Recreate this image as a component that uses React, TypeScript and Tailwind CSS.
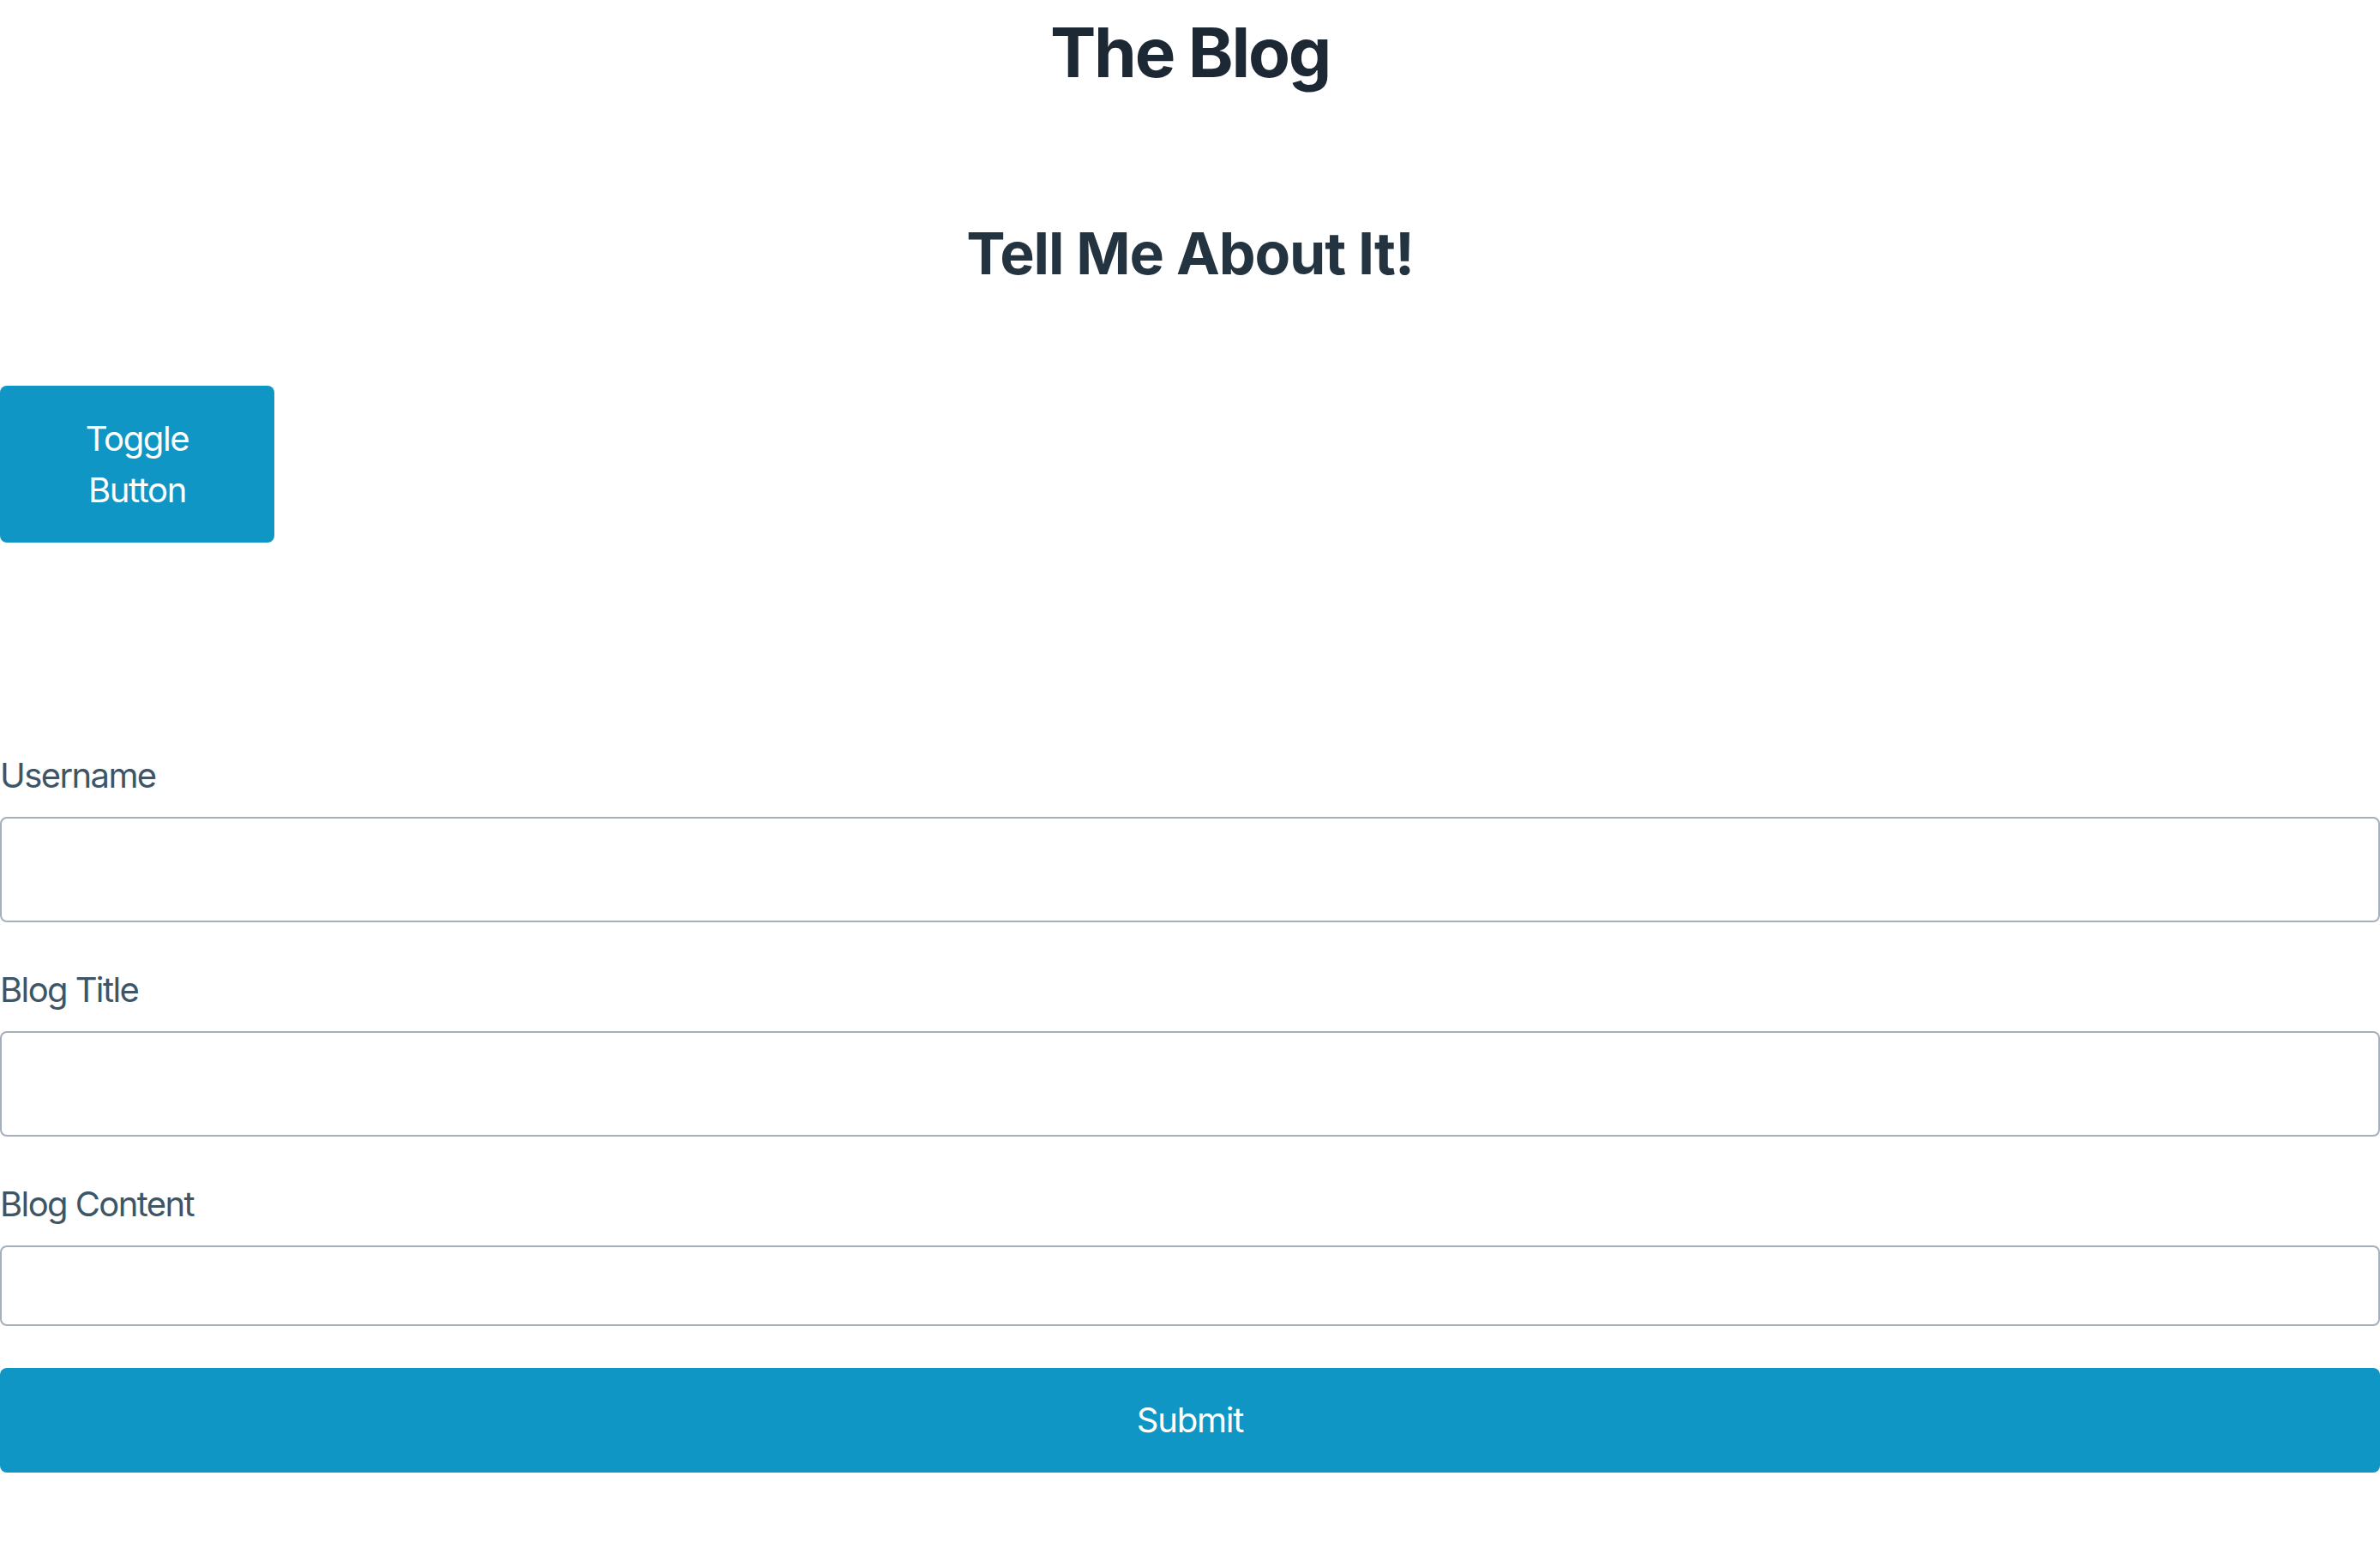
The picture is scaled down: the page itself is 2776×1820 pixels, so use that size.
import { useState } from "react"

const Field = ({ label, id, tall = true }: { label: string; id: string; tall?: boolean }) => (
  <div className="flex flex-col">
    <label htmlFor={id} className="text-[40px] leading-[60px] tracking-[-0.04em] text-[#3e5566]">
      {label}
    </label>
    {tall ? (
      <input
        id={id}
        type="text"
        className="mt-[18px] h-[123px] w-full rounded-[8px] border-2 border-[#a3b0bb] px-4 text-[40px] outline-none"
      />
    ) : (
      <textarea
        id={id}
        rows={1}
        className="mt-[18px] block h-[94px] w-full resize-none rounded-[8px] border-2 border-[#a3b0bb] px-4 text-[40px] outline-none"
      />
    )}
  </div>
)

const App = () => {
  const [open, setOpen] = useState(false)

  return (
    <div className="min-h-screen bg-white font-['Inter',sans-serif]">
      <h1 className="pt-[13px] text-center text-[80px] leading-[96px] font-bold tracking-[-0.028em] text-[#1c2833]">
        The Blog
      </h1>
      <h2 className="mt-[145px] text-center text-[68px] leading-[82px] font-bold tracking-[-0.016em] text-[#243340]">
        Tell Me About It!
      </h2>

      <button
        type="button"
        onClick={() => setOpen(!open)}
        className="mt-[114px] block h-[183px] w-[320px] rounded-[8px] bg-[#0f96c4] px-[64px] text-[40px] leading-[60px] tracking-[-0.035em] text-white"
      >
        Toggle Button
      </button>

      <form className="mt-[242px] flex flex-col gap-[49px]" onSubmit={(e) => e.preventDefault()}>
        <Field label="Username" id="username" />
        <Field label="Blog Title" id="title" />
        <Field label="Blog Content" id="content" tall={false} />
        <button
          type="submit"
          className="h-[122px] w-full rounded-[8px] bg-[#0f96c4] text-[40px] tracking-[-0.03em] text-white"
        >
          Submit
        </button>
      </form>
    </div>
  )
}

export default App
